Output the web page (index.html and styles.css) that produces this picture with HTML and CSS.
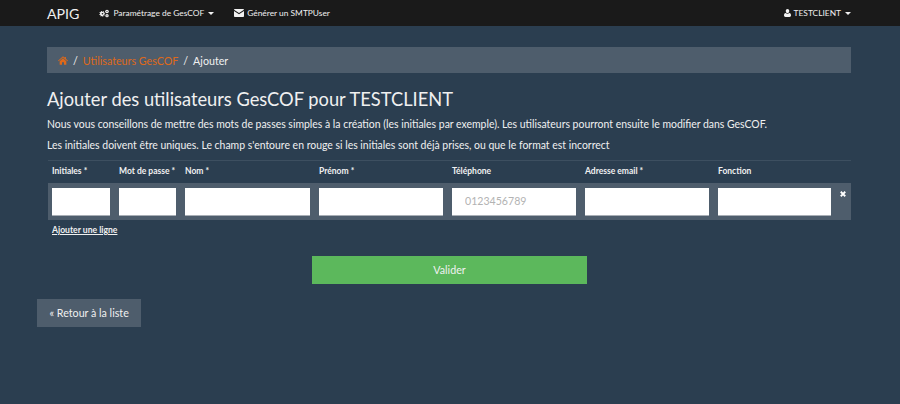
FILE: index.html
```html
<!DOCTYPE html>
<html lang="fr">
<head>
    <meta charset="UTF-8">
    <title>Ajouter des utilisateurs GesCOF</title>
    <link rel="stylesheet" href="styles.css">
</head>
<body>

    <nav class="navbar">
        <a class="brand" href="#">APIG</a>
        <a class="nav-link nav-first" href="#">
            <svg class="icon icon-cogs" viewBox="0 0 12 10"><g fill="#f2f2f2"><path d="M4 1.600l.9-.3.4.9.9.1.5-.8.8.5-.3.9.6.7.9-.2.2 1-.9.3-.1.9.8.5-.5.8-.9-.3-.7.6.2.9-1 .2-.3-.9-.9-.1-.5.8-.8-.5.3-.9-.6-.7-.9.2-.2-1 .9-.3.1-.9-.8-.5.5-.8.9.3z" transform="translate(-1.600 .6)"/><circle cx="9.600" cy="2.600" r="2.200"/><circle cx="9.600" cy="7.600" r="2"/></g><circle cx="4.200" cy="5.300" r="1" fill="#1a1a1a"/><circle cx="9.600" cy="2.600" r=".7" fill="#1a1a1a"/><circle cx="9.600" cy="7.600" r=".6" fill="#1a1a1a"/></svg>
            Paramétrage de GesCOF <span class="caret"></span>
        </a>
        <a class="nav-link nav-second" href="#">
            <svg class="icon icon-mail" viewBox="0 0 10 8"><path fill="#f2f2f2" d="M.8 0h8.400c.4 0 .8.4.8.8L5 4 0 .8C0 .4.4 0 .8 0zM0 2l5 3.200L10 2v5.200c0 .4-.4.8-.8.8H.8C.4 8 0 7.600 0 7.200z"/></svg>
            Générer un SMTPUser
        </a>
        <a class="nav-link nav-user" href="#">
            <svg class="icon icon-user" viewBox="0 0 8 9"><path fill="#f2f2f2" d="M4 0c1.200 0 2 .9 2 2.200C6 3.500 5.200 4.600 4 4.600S2 3.500 2 2.200C2 .9 2.800 0 4 0zM1.800 4.400C2.400 5 3.100 5.300 4 5.300s1.600-.3 2.200-.9C7.400 4.500 8 5.500 8 7c0 1.200-.7 2-1.700 2H1.700C.7 9 0 8.200 0 7c0-1.500.6-2.500 1.800-2.600z"/></svg>
            TESTCLIENT <span class="caret"></span>
        </a>
    </nav>

    <main class="container">
        <ol class="breadcrumb">
            <li><a href="#"><svg class="icon-home" viewBox="0 0 12 10"><path fill="#df691a" d="M6 0l2 1.700V.7h1.500v2.300L12 5.200l-.7.7L6 1.400.7 5.900 0 5.200zM6 2.400l4 3.400V10H7.200V7H4.800v3H2V5.800z"/></svg></a></li>
            <li class="sep">/</li>
            <li><a href="#">Utilisateurs GesCOF</a></li>
            <li class="sep">/</li>
            <li class="active">Ajouter</li>
        </ol>

        <h1>Ajouter des utilisateurs GesCOF pour TESTCLIENT</h1>
        <p>Nous vous conseillons de mettre des mots de passes simples à la création (les initiales par exemple). Les utilisateurs pourront ensuite le modifier dans GesCOF.</p>
        <p>Les initiales doivent être uniques. Le champ s'entoure en rouge si les initiales sont déjà prises, ou que le format est incorrect</p>

        <table class="users-table">
            <colgroup>
                <col class="col-1"><col class="col-2"><col class="col-3"><col class="col-long"><col class="col-long"><col class="col-long"><col class="col-last"><col>
            </colgroup>
            <thead>
                <tr>
                    <th>Initiales *</th>
                    <th>Mot de passe *</th>
                    <th>Nom *</th>
                    <th>Prénom *</th>
                    <th>Téléphone</th>
                    <th>Adresse email *</th>
                    <th>Fonction</th>
                    <th></th>
                </tr>
            </thead>
            <tbody>
                <tr>
                    <td><input type="text"></td>
                    <td><input type="text"></td>
                    <td><input type="text"></td>
                    <td><input type="text"></td>
                    <td><input type="text" placeholder="0123456789"></td>
                    <td><input type="text"></td>
                    <td><input type="text"></td>
                    <td class="remove"><svg class="icon-remove" viewBox="0 0 8 8"><path fill="none" stroke="#fff" stroke-width="2.400" d="M1 1l6 6M7 1L1 7"/></svg></td>
                </tr>
            </tbody>
        </table>
        <a class="add-line" href="#">Ajouter une ligne</a>

        <div class="submit-row">
            <button class="btn-submit" type="button">Valider</button>
        </div>
    </main>

    <a class="btn-back" href="#">« Retour à la liste</a>

</body>
</html>
```

FILE: styles.css
```css
* {
    box-sizing: border-box;
}
body {
    margin: 0;
    font-family: Lato, "Open Sans", sans-serif;
    font-size: 11px;
    color: #f0f0f0;
    background-color: #2b3e50;
}
a {
    text-decoration: none;
}
.navbar {
    display: flex;
    align-items: center;
    height: 26px;
    padding-left: 47px;
    background-color: #1a1a1a;
}
.brand {
    font-size: 14.200px;
    color: #f0f0f0;
}
.nav-link {
    display: flex;
    align-items: center;
    font-size: 8.400px;
    color: #f0f0f0;
}
.nav-first {
    margin-left: 20px;
}
.nav-second {
    margin-left: 20px;
}
.nav-user {
    margin-left: auto;
    margin-right: 49px;
}
.icon {
    display: block;
    margin-right: 4px;
}
.icon-cogs {
    width: 10px;
    height: 9px;
}
.icon-mail {
    width: 10px;
    height: 8px;
    margin-right: 3px;
}
.icon-user {
    width: 7px;
    height: 8px;
    margin-right: 3px;
}
.caret {
    width: 0;
    height: 0;
    margin-left: 4px;
    border-top: 3px solid #f0f0f0;
    border-left: 3px solid transparent;
    border-right: 3px solid transparent;
}
.container {
    padding: 21px 49px 0 47px;
}
.breadcrumb {
    display: flex;
    align-items: center;
    gap: 5px;
    height: 26px;
    margin: 0;
    padding: 0 11px;
    list-style: none;
    font-size: 10.700px;
    background-color: #4e5d6c;
}
.breadcrumb a {
    color: #df691a;
}
.icon-home {
    display: block;
    width: 10px;
    height: 9px;
}
.sep {
    color: #f0f0f0;
}
h1 {
    margin: 16px 0 7px;
    font-size: 18.300px;
    font-weight: 400;
    line-height: 21px;
}
p {
    margin: 0 0 6px;
    font-size: 10.450px;
    line-height: 15px;
}
.users-table {
    width: 803px;
    margin: 7px 0 0 1px;
    border-collapse: collapse;
    table-layout: fixed;
    border-top: 1px solid #3d4f60;
}
.col-1 {
    width: 67px;
}
.col-2 {
    width: 66px;
}
.col-3 {
    width: 134px;
}
.col-long {
    width: 133px;
}
.col-last {
    width: 122px;
}
.users-table th {
    height: 22px;
    padding: 0 4px 2px;
    font-size: 8.500px;
    font-weight: 700;
    text-align: left;
    white-space: nowrap;
}
.users-table td {
    height: 37px;
    padding: 5px 5px 4px 4px;
    background-color: #4e5d6c;
}
.users-table input {
    display: block;
    width: 100%;
    height: 28px;
    padding: 0 13px;
    border: 0;
    border-bottom: 1px solid #a8aeb5;
    border-radius: 0;
    font-family: Lato, sans-serif;
    font-size: 10.600px;
    background-color: #fff;
}
.users-table input::placeholder {
    color: #b3b3b3;
}
.users-table .remove {
    padding: 0 0 0 4px;
    vertical-align: top;
}
.icon-remove {
    display: block;
    width: 6px;
    height: 6px;
    margin-top: 8px;
}
.add-line {
    display: block;
    width: fit-content;
    margin: 5px 0 0 5px;
    font-size: 8.600px;
    font-weight: 700;
    color: #f0f0f0;
    text-decoration: underline;
}
.submit-row {
    display: flex;
    justify-content: center;
    margin-top: 21px;
    padding-left: 1px;
}
.btn-submit {
    width: 275px;
    height: 28px;
    border: 0;
    font-family: Lato, sans-serif;
    font-size: 10.700px;
    color: #f0f0f0;
    background-color: #5cb85c;
}
.btn-back {
    display: inline-block;
    height: 28px;
    margin: 15px 0 0 37px;
    padding: 0 12.500px;
    font-size: 10.700px;
    line-height: 28px;
    color: #f0f0f0;
    background-color: #4e5d6c;
}
```
